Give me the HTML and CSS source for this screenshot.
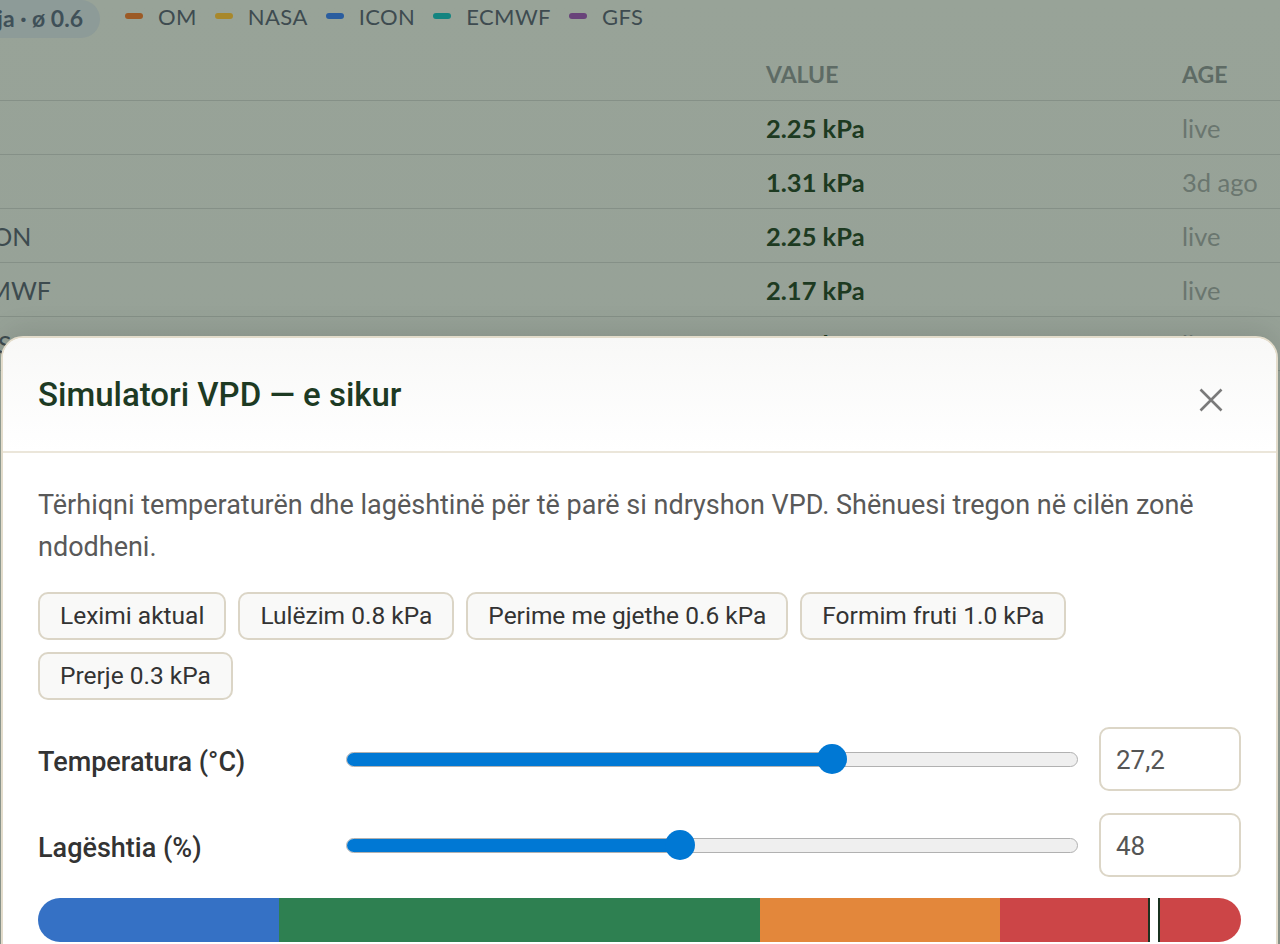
FILE: index.html
```html
<!DOCTYPE html>
<html lang="sq">
<head>
<meta charset="utf-8">
<title>Simulatori VPD</title>
<link rel="stylesheet" href="styles.css">
</head>
<body>
<div class="page">
  <div class="legend">
    <span class="pill">Mesatarja · ø 0.6</span>
    <span class="leg"><i class="sw sw-om"></i>OM</span>
    <span class="leg"><i class="sw sw-nasa"></i>NASA</span>
    <span class="leg"><i class="sw sw-icon"></i>ICON</span>
    <span class="leg"><i class="sw sw-ecmwf"></i>ECMWF</span>
    <span class="leg"><i class="sw sw-gfs"></i>GFS</span>
  </div>
  <div class="table">
    <div class="row head"><span class="c-src"></span><span class="c-val">VALUE</span><span class="c-age">AGE</span></div>
    <div class="row"><span class="c-src"></span><span class="c-val">2.25 kPa</span><span class="c-age">live</span></div>
    <div class="row"><span class="c-src"></span><span class="c-val">1.31 kPa</span><span class="c-age">3d ago</span></div>
    <div class="row"><span class="c-src src-icon">ICON</span><span class="c-val">2.25 kPa</span><span class="c-age">live</span></div>
    <div class="row"><span class="c-src src-ecmwf">ECMWF</span><span class="c-val">2.17 kPa</span><span class="c-age">live</span></div>
    <div class="row"><span class="c-src src-gfs">GFS</span><span class="c-val">2.07 kPa</span><span class="c-age">live</span></div>
  </div>
</div>

<div class="modal">
  <div class="modal-head">
    <h2 class="modal-title">Simulatori VPD — e sikur</h2>
    <button class="close" aria-label="Mbyll">
      <svg width="24" height="24" viewBox="0 0 24 24"><path d="M1.5 1.5 L22.5 22.5 M22.5 1.5 L1.5 22.5" stroke="#7a7a7a" stroke-width="2.6" fill="none"/></svg>
    </button>
  </div>
  <div class="modal-body">
    <p class="intro">Tërhiqni temperaturën dhe lagështinë për të parë si ndryshon VPD. Shënuesi tregon në cilën zonë ndodheni.</p>
    <div class="chips">
      <button class="chip">Leximi aktual</button>
      <button class="chip">Lulëzim 0.8 kPa</button>
      <button class="chip">Perime me gjethe 0.6 kPa</button>
      <button class="chip">Formim fruti 1.0 kPa</button>
      <button class="chip">Prerje 0.3 kPa</button>
    </div>
    <div class="controls">
      <label class="ctl-label">Temperatura (°C)</label>
      <div class="range">
        <div class="track"><div class="fill" style="width:66.4%"></div></div>
        <div class="thumb" style="left:calc(66.4% - 15px)"></div>
      </div>
      <div class="num">27,2</div>

      <label class="ctl-label">Lagështia (%)</label>
      <div class="range">
        <div class="track"><div class="fill" style="width:45.6%"></div></div>
        <div class="thumb" style="left:calc(45.6% - 15px)"></div>
      </div>
      <div class="num">48</div>
    </div>
    <div class="zones">
      <div class="z z-blue"></div>
      <div class="z z-green"></div>
      <div class="z z-orange"></div>
      <div class="z z-red"></div>
      <div class="marker" style="left:calc(92.8% - 6px)"></div>
    </div>
  </div>
</div>
</body>
</html>
```

FILE: styles.css
```css
html, body {
  margin: 0;
  padding: 0;
  height: 944px;
  overflow: hidden;
}
body {
  background: linear-gradient(#98a398, #96a197 60%, #8e998f);
  font-family: "Lato", "DejaVu Sans", sans-serif;
  position: relative;
}
.page {
  width: 1280px;
}
.legend {
  display: flex;
  align-items: flex-start;
  height: 38px;
  gap: 16px;
}
.pill {
  width: 300px;
  margin-left: -200px;
  height: 38px;
  line-height: 36px;
  box-sizing: border-box;
  padding-right: 17px;
  text-align: right;
  white-space: nowrap;
  overflow: hidden;
  border-radius: 19px;
  background: #8d9b98;
  color: #3f5058;
  font-weight: 700;
  font-size: 23px;
  margin-right: 9px;
}
.leg {
  display: inline-flex;
  align-items: center;
  height: 32px;
  gap: 15px;
  color: #3e4b50;
  font-size: 22px;
  letter-spacing: 0.4px;
  margin-right: 2px;
}
.sw {
  display: inline-block;
  width: 18px;
  height: 6px;
  border-radius: 3px;
}
.sw-om { background: #9c5a25; }
.sw-nasa { background: #a8882b; }
.sw-icon { background: #2a5d9f; }
.sw-ecmwf { background: #148480; }
.sw-gfs { background: #69437a; }

.table {
  margin-top: 9px;
  margin-left: -31px;
}
.row {
  display: grid;
  grid-template-columns: 797px 416px 1fr;
  align-items: center;
  height: 53px;
  border-bottom: 1px solid #859087;
}
.row.head span {
  color: #5e6b65;
  font-weight: 700;
  font-size: 23px;
}
.c-src {
  color: #3d4b4f;
  font-size: 25px;
  white-space: nowrap;
}
.c-val {
  color: #1d3a21;
  font-weight: 700;
  font-size: 25.5px;
}
.c-age {
  color: #6a766f;
  font-size: 25.5px;
}
.src-ecmwf { margin-left: -12px; }
.src-gfs { margin-left: -3px; }

/* Modal */
.modal {
  position: absolute;
  left: 1px;
  top: 336px;
  width: 1277px;
  height: 660px;
  box-sizing: border-box;
  background: #fff;
  border: 2px solid #e3dccb;
  border-radius: 22px 22px 0 0;
  box-shadow: 0 -6px 28px rgba(0, 0, 0, 0.10);
  font-family: "Roboto", "Liberation Sans", sans-serif;
  overflow: hidden;
}
.modal-head {
  display: flex;
  align-items: center;
  justify-content: space-between;
  height: 113px;
  padding: 0 42px 0 35px;
  background: linear-gradient(#f8f8f7, #ffffff);
  border-bottom: 2px solid #ebe6da;
}
.modal-title {
  margin: 0;
  font-size: 33px;
  font-weight: 500;
  color: #1d3a23;
}
.close {
  width: 46px;
  height: 46px;
  margin-top: 10px;
  border: 0;
  padding: 0;
  background: transparent;
  display: flex;
  align-items: center;
  justify-content: center;
}
.modal-body {
  padding: 31px 35px 0 35px;
}
.intro {
  margin: 0;
  font-size: 27px;
  line-height: 42px;
  color: #595959;
}
.chips {
  display: flex;
  flex-wrap: wrap;
  gap: 12px 12px;
  margin-top: 24px;
}
.chip {
  font-family: inherit;
  font-size: 24.5px;
  line-height: 29px;
  padding: 7px 20px 8px;
  color: #333;
  background: #f9f9f8;
  border: 2px solid #dbd5c6;
  border-radius: 10px;
}
.controls {
  display: grid;
  grid-template-columns: 287px 1fr 142px;
  grid-auto-rows: 64px;
  column-gap: 21px;
  row-gap: 22px;
  align-items: center;
  margin-top: 27px;
}
.ctl-label {
  font-size: 27px;
  font-weight: 500;
  color: #333;
  padding-top: 5px;
}
.range {
  position: relative;
  height: 30px;
  display: flex;
  align-items: center;
}
.track {
  position: relative;
  width: 100%;
  height: 15px;
  box-sizing: border-box;
  background: #efefef;
  border: 1px solid #b1b1b1;
  border-radius: 8px;
  overflow: hidden;
}
.fill {
  position: absolute;
  left: -1px;
  top: -1px;
  bottom: -1px;
  background: #0078d4;
  border-radius: 8px 0 0 8px;
}
.thumb {
  position: absolute;
  top: 0;
  width: 30px;
  height: 30px;
  border-radius: 50%;
  background: #0078d4;
}
.num {
  height: 64px;
  box-sizing: border-box;
  border: 2px solid #dcd6c7;
  border-radius: 10px;
  padding: 2px 15px 0;
  display: flex;
  align-items: center;
  font-size: 26px;
  color: #555;
}
.zones {
  position: relative;
  display: flex;
  height: 44px;
  margin-top: 21px;
  border-radius: 22px;
  overflow: hidden;
}
.z { height: 100%; }
.z-blue { flex: 20; background: #3571c5; }
.z-green { flex: 40; background: #2e8051; }
.z-orange { flex: 20; background: #e3873b; }
.z-red { flex: 20; background: #cc4547; }
.marker {
  position: absolute;
  top: 0;
  bottom: 0;
  width: 12px;
  box-sizing: border-box;
  background: #fff;
  border-left: 2px solid #1b3220;
  border-right: 2px solid #1b3220;
}
```
